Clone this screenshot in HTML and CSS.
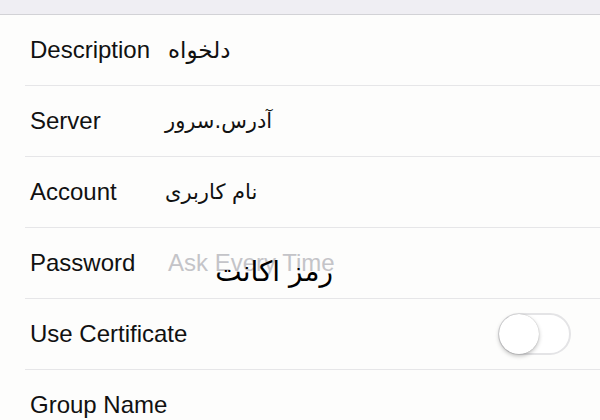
FILE: index.html
```html
<!DOCTYPE html>
<html lang="en">
<head>
<meta charset="utf-8">
<link rel="stylesheet" href="styles.css">
</head>
<body>
<div class="topband"></div>
<div class="list">
  <div class="row">
    <div class="label">Description</div>
    <div class="value fa first">دلخواه</div>
  </div>
  <div class="row">
    <div class="label">Server</div>
    <div class="value fa">آدرس.سرور</div>
  </div>
  <div class="row">
    <div class="label">Account</div>
    <div class="value fa">نام کاربری</div>
  </div>
  <div class="row">
    <div class="label">Password</div>
    <div class="value placeholder">Ask Every Time<span class="overlay fa">رمز اکانت</span></div>
  </div>
  <div class="row">
    <div class="label">Use Certificate</div>
    <div class="spacer"></div>
    <div class="toggle"><div class="knob"></div></div>
  </div>
  <div class="row">
    <div class="label">Group Name</div>
  </div>
</div>
</body>
</html>
```
FILE: styles.css
```css
html, body {
  margin: 0;
  padding: 0;
  background: #fdfdfc;
}
body {
  font-family: "Liberation Sans", Arial, sans-serif;
  color: #111;
  width: 600px;
  height: 420px;
  overflow: hidden;
}
.topband {
  height: 14px;
  background: #efeef3;
  border-bottom: 1px solid #d2d2d6;
}
.list {
  padding-left: 25px;
}
.row {
  height: 70px;
  border-bottom: 1px solid #e6e6e8;
  display: flex;
  align-items: center;
  padding-left: 5px;
  padding-right: 29px;
  font-size: 24px;
}
.label {
  width: 135px;
  flex: none;
  white-space: nowrap;
}
.value {
  position: relative;
  white-space: nowrap;
}
.fa {
  font-family: "DejaVu Sans", sans-serif;
  font-size: 21px;
  direction: rtl;
}
.first {
  margin-left: 3px;
  font-size: 23px;
}
.placeholder {
  color: #c4c4c8;
  padding-left: 3px;
}
.overlay {
  position: absolute;
  left: 46px;
  top: 6px;
  color: #000;
  font-size: 28px;
  width: 122px;
  text-align: right;
}
.spacer {
  flex: 1;
}
.toggle {
  width: 69px;
  height: 38px;
  border: 2px solid #e4e4e6;
  border-radius: 21px;
  background: #fff;
  position: relative;
  flex: none;
}
.knob {
  position: absolute;
  left: -1px;
  top: -1px;
  width: 40px;
  height: 40px;
  border-radius: 50%;
  background: #fff;
  box-shadow: 0 2px 4px rgba(0,0,0,0.25), 0 0 1px rgba(0,0,0,0.3);
}
```
